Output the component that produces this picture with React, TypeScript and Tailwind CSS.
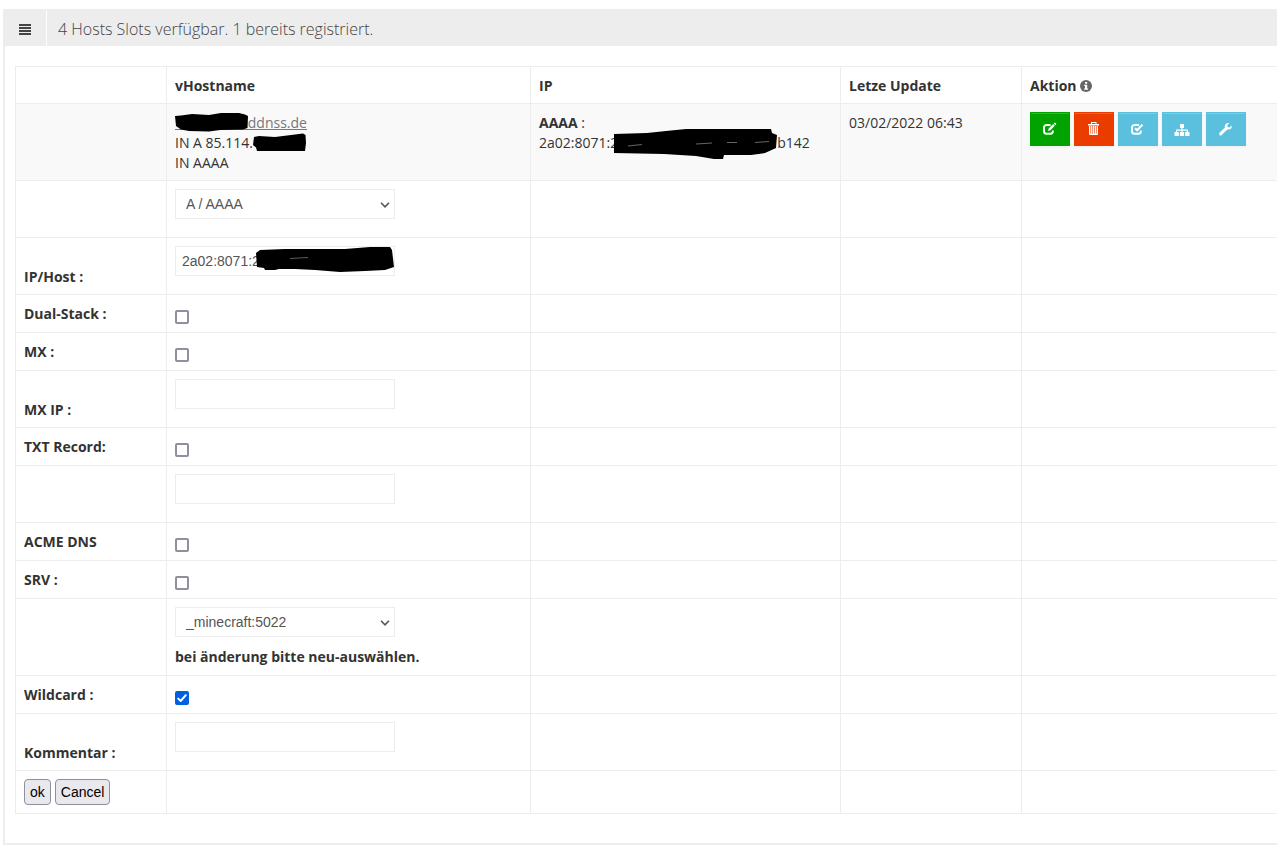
import type { ReactNode } from "react";

const border = "border border-[#ededed]";
const cell = `${border} p-2 align-top`;
const textCell = `${border} px-2 pt-[9px] pb-[7px] align-top`;
const lowCell = `${border} px-2 pt-[9px] pb-[7px] align-bottom`;
const field =
  "block w-[220px] h-[30px] border border-[#ededed] bg-white text-sm leading-5 text-[#555] font-['Liberation_Sans',Arial,sans-serif]";
const formButton =
  "h-[26px] px-[5px] rounded border border-[#8f8f9d] bg-[#e9e9ed] text-black text-sm leading-5 font-['Liberation_Sans',Arial,sans-serif]";

function Row({ label, htmlFor, low, children }: {
  label?: string;
  htmlFor?: string;
  low?: boolean;
  children?: ReactNode;
}) {
  return (
    <tr>
      <td className={low ? lowCell : textCell}>
        {label && (
          <label htmlFor={htmlFor} className="block font-bold">
            {label}
          </label>
        )}
      </td>
      <td className={cell}>{children}</td>
      <td className={cell} />
      <td className={cell} />
      <td className={`${cell} border-r-0`} />
    </tr>
  );
}

function Checkbox({ id, checked }: { id: string; checked?: boolean }) {
  return (
    <div className="relative w-3.5 mt-[7px]">
      <input
        id={id}
        type="checkbox"
        defaultChecked={checked}
        className="peer block size-3.5 appearance-none rounded-xs border-2 border-[#8f8f9d] bg-white checked:border-[#0060df] checked:bg-[#0060df]"
      />
      <svg
        viewBox="0 0 14 14"
        className="absolute inset-0 size-3.5 hidden pointer-events-none peer-checked:block"
        fill="none" stroke="#fff" strokeWidth="2" strokeLinecap="round" strokeLinejoin="round"
      >
        <path d="M3.2 7.6 5.7 10 10.8 4.2" />
      </svg>
    </div>
  );
}

function TextField({ id, label, value }: { id: string; label?: string; value?: string }) {
  return (
    <input id={id} type="text" aria-label={label} defaultValue={value} className={`${field} mb-2.5 px-[6px]`} />
  );
}

function SelectField({ id, label, options }: { id: string; label: string; options: string[] }) {
  return (
    <div className="relative w-[220px] mb-2.5">
      <select id={id} aria-label={label} className={`${field} appearance-none pl-2.5 pr-6`}>
        {options.map((o) => (
          <option key={o}>{o}</option>
        ))}
      </select>
      <svg
        viewBox="0 0 10 6"
        className="absolute right-[5px] top-[13px] w-2.5 h-1.5 pointer-events-none"
        fill="none" stroke="#555" strokeWidth="1.6"
      >
        <path d="M1 0.8 5 4.8 9 0.8" />
      </svg>
    </div>
  );
}

function ActionButton({ title, color, children }: { title: string; color: string; children: ReactNode }) {
  return (
    <button
      type="button"
      aria-label={title}
      className={`flex items-center justify-center w-10 h-[34px] border text-white shadow-[inset_0_1px_0_rgba(255,255,255,0.2),0_1px_2px_rgba(0,0,0,0.05)] ${color}`}
    >
      <svg viewBox="0 0 16 16" className="size-4" fill="currentColor">
        {children}
      </svg>
    </button>
  );
}

export default function App() {
  return (
    <div className="pl-[3px] pt-[9px] bg-white text-sm leading-5 text-[#333] font-['Open_Sans',sans-serif]">
      <section className="border-2 border-r-0 border-[#ededed]">
        <header className="flex h-[35px] bg-[#ededed] text-[#444]">
          <span className="flex items-center w-[42px] pl-3.5 pt-0.5 border-r border-white">
            <svg viewBox="0 0 12 11" className="w-3 h-[11px]" fill="currentColor" shapeRendering="crispEdges">
              <path d="M0 0h12v2H0zM0 3h12v2H0zM0 6h12v2H0zM0 9h12v2H0z" />
            </svg>
          </span>
          <h2 className="px-[11px] text-base leading-9 font-light">
            4 Hosts Slots verfügbar. 1 bereits registriert.
          </h2>
        </header>

        <form className="pl-2.5 pt-5 pb-[29px]" onSubmit={(e) => e.preventDefault()}>
          <table className="w-full table-fixed border-collapse">
            <colgroup>
              <col className="w-[151px]" />
              <col className="w-[364px]" />
              <col className="w-[310px]" />
              <col className="w-[181px]" />
              <col />
            </colgroup>
            <thead>
              <tr className="text-left font-bold">
                <th className={textCell} />
                <th className={textCell}>vHostname</th>
                <th className={textCell}>IP</th>
                <th className={textCell}>Letze Update</th>
                <th className={`${textCell} border-r-0`}>
                  <span className="flex items-center gap-[3px]">
                    Aktion
                    <svg viewBox="0 0 12 12" className="size-3">
                      <circle cx="6" cy="6" r="6" fill="#666" />
                      <path d="M5 2h2.2v1.7H5zM4.2 4.8h3v3.7h.9v1.2H4.1V8.500h.9V6h-.8z" fill="#fff" />
                    </svg>
                  </span>
                </th>
              </tr>
            </thead>
            <tbody>
              <tr className="bg-[#f9f9f9]">
                <td className={cell} />
                <td className={textCell}>
                  <a href="#" className="text-[#777] underline">
                    <span className="relative whitespace-pre">
                      {"\u00a0".repeat(19)}
                      <svg viewBox="0 0 74 20" className="absolute left-0 top-0 w-[74px] h-5" fill="#000">
                        <path d="M0 3 6 2.500 17 1 34 2 46 0 64 0 70 1.500 73 3 72.500 15 68 16.500 45 17 34 18.500 14 18 6 16.500 1 13z" />
                      </svg>
                    </span>
                    .ddnss.de
                  </a>
                  <br />
                  IN A 85.114.
                  <span className="relative">
                    <svg viewBox="0 0 54 20" className="absolute left-0 top-0 w-[54px] h-5" fill="#000">
                      <path d="M1 4 6 3 22 4 38 2 50 .5 52.500 2 53 10 52 18 4 18 3 14.500 0 12z" />
                    </svg>
                  </span>
                  <br />
                  IN AAAA
                </td>
                <td className={textCell}>
                  <b>AAAA</b> :
                  <div className="flex">
                    2a02:8071:2
                    <span className="relative -ml-1 w-[163px]">
                      <svg viewBox="0 0 163 32" className="absolute left-0 -top-1 w-[163px] h-8" fill="#000">
                        <path d="M0 5 33 4 52 2 72 0 157 0 158 4 163 6 162 19 151 24 137 26 110 26 109 30 100 30 82 27 50 25 0 24z" />
                        <path d="M14 17 28 15.500M82 15 98 14M113 13.500 123 13.500M141 13.500 155 12.500" fill="none" stroke="#aaa" strokeWidth=".6" />
                      </svg>
                    </span>
                    b142
                  </div>
                </td>
                <td className={textCell}>03/02/2022 06:43</td>
                <td className={`${cell} border-r-0`}>
                  <div className="flex gap-1">
                    <ActionButton title="Bearbeiten" color="bg-[#00a300] border-[#00a300]">
                      <path
                        d="M8.500 4H4.800Q2 4 2 6.500v3.700Q2 12.800 4.800 12.800h3.400Q10.800 12.800 10.800 10.500V9.500"
                        fill="none" stroke="currentColor" strokeWidth="1.900"
                      />
                      <path d="M6 10l.7-2.500 4.400-4.400 1.700 1.700-4.400 4.400zM11.700 2.500l.8-.8q.5-.3 1 .2l.6.6q.4.500 0 1l-.8.800z" />
                    </ActionButton>
                    <ActionButton title="Löschen" color="bg-[#eb3c00] border-[#eb3c00]">
                      <path d="M5 1h5.500v2H13v1.500H2V3h3zM6 2v1h3.500V2z" fillRule="evenodd" />
                      <path d="M3 5h9v8q0 1-1 1H4q-1 0-1-1z" fillOpacity=".35" />
                      <path d="M3 5h1.200v8H3zM5.200 5h1v8h-1zM7.100 5h1v8h-1zM9 5h1v8H9zM10.900 5H12v8h-1.100zM3 12.800h9L11.500 14h-8z" />
                    </ActionButton>
                    <ActionButton title="Prüfen" color="bg-[#5bc0de] border-[#5bc0de]">
                      <path
                        d="M9 4H4.800Q2 4 2 6.500v3.700Q2 12.800 4.800 12.800h3.400Q10.800 12.800 10.800 10.500V9.500"
                        fill="none" stroke="currentColor" strokeWidth="1.900"
                      />
                      <path d="M5 7.200 7.200 9.300 12.400 3.600" fill="none" stroke="currentColor" strokeWidth="2.100" />
                    </ActionButton>
                    <ActionButton title="Netzwerk" color="bg-[#5bc0de] border-[#5bc0de]">
                      <path d="M6 3h4v4H8.600v1.500H14V11h1.500v4h-4.300v-4h1.600V9.700H8.600V11h1.500v4H5.900v-4h1.500V9.700H3.200V11h1.600v4H.5v-4H2V8.500h5.400V7H6z" />
                    </ActionButton>
                    <ActionButton title="Werkzeuge" color="bg-[#5bc0de] border-[#5bc0de]">
                      <path d="M11.200 2 9.200 4.200l.4 1.900 1.900.4 2.200-2.100c.4 2-.7 3.700-2.400 4.100-.8.200-1.400.1-2-.1L3.700 14q-1.100 1-2.200 0-1-1.100 0-2.200l5.500-5.400C6.200 4.100 8.100 1.300 11.200 2z" />
                    </ActionButton>
                  </div>
                </td>
              </tr>

              <Row>
                <SelectField id="type" label="Typ" options={["A / AAAA"]} />
              </Row>
              <Row label="IP/Host :" htmlFor="ip" low>
                <div className="relative w-[220px]">
                  <TextField id="ip" value="2a02:8071:2" />
                  <svg
                    viewBox="0 0 139 26"
                    className="absolute left-20 top-px w-[139px] h-[26px] pointer-events-none"
                    fill="#000"
                  >
                    <path d="M1 6 5 3 30 2 90 2 115 0 135 0 137 3 139 20 130 23 110 24 85 25 60 23 40 22 24 22 20 23 10 23 9 21 2 20z" />
                    <path d="M35 11.500 44 11 53 10.500" fill="none" stroke="#999" strokeWidth=".6" />
                  </svg>
                </div>
              </Row>
              <Row label="Dual-Stack :" htmlFor="dual">
                <Checkbox id="dual" />
              </Row>
              <Row label="MX :" htmlFor="mx">
                <Checkbox id="mx" />
              </Row>
              <Row label="MX IP :" htmlFor="mxip" low>
                <TextField id="mxip" />
              </Row>
              <Row label="TXT Record:" htmlFor="txt">
                <Checkbox id="txt" />
              </Row>
              <Row>
                <TextField id="txtvalue" label="TXT Record" />
              </Row>
              <Row label="ACME DNS" htmlFor="acme">
                <Checkbox id="acme" />
              </Row>
              <Row label="SRV :" htmlFor="srv">
                <Checkbox id="srv" />
              </Row>
              <Row>
                <SelectField id="service" label="SRV" options={["_minecraft:5022"]} />
                <b className="block">bei änderung bitte neu-auswählen.</b>
              </Row>
              <Row label="Wildcard :" htmlFor="wildcard">
                <Checkbox id="wildcard" checked />
              </Row>
              <Row label="Kommentar :" htmlFor="comment" low>
                <TextField id="comment" />
              </Row>

              <tr>
                <td className={cell}>
                  <div className="flex gap-1">
                    <button type="submit" className={formButton}>ok</button>
                    <button type="button" className={formButton}>Cancel</button>
                  </div>
                </td>
                <td className={cell} />
                <td className={cell} />
                <td className={cell} />
                <td className={`${cell} border-r-0`} />
              </tr>
            </tbody>
          </table>
        </form>
      </section>
    </div>
  );
}
